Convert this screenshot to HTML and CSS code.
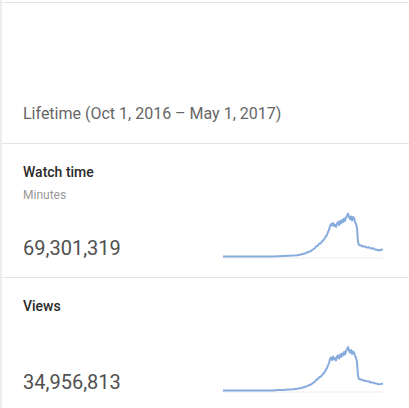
FILE: index.html
```html
<!DOCTYPE html>
<html lang="en">
<head>
  <meta charset="UTF-8" />
  <meta name="viewport" content="width=device-width, initial-scale=1.0"/>
  <title>Lifetime stats</title>
  <link rel="stylesheet" href="styles.css">
</head>
<body>
  <div class="panel">
    <div class="period">
      <span class="period-label">Lifetime (Oct 1, 2016 – May 1, 2017)</span>
    </div>

    <div class="metric">
      <div class="metric-info">
        <div class="metric-title">Watch time</div>
        <div class="metric-unit">Minutes</div>
        <div class="metric-value">69,301,319</div>
      </div>
      <svg class="spark" width="160" height="52" viewBox="0 0 160 52">
        <rect x="0" y="49.5" width="160" height="1" fill="#eeeeee"/>
        <polyline class="spark-line" points="0,48.5 50,48.5 55,48.2 60,48 65,47.8 70,47.6 74,47.2 78,46.5 80,45.8 82,45.5 84,44.5 86,43.8 88,43 90,41.5 92,40 93,38.5 95,37.5 96,36 98,35 99,33.5 101,31.5 102,30 103,28 104,27 105,24 106,22 107,18 108,16 109,17.5 110,15 111,18 112,16.5 113,19 114,15.5 115,14 116,17 117,13 118,15.5 119,12 120,14 121,10.5 122,13 123,9.5 124,8 125,5.5 126,9 127,11 128,8.5 129,12.5 130,9 131,10 132,14 133,16 134,20 135,34 136,37 138,37.5 140,38.5 142,38.6 144,39.5 146,39.3 148,40.5 150,40.2 152,41.5 154,41.8 156,42.5 158,41.8 160,41.5"/>
      </svg>
    </div>

    <div class="metric">
      <div class="metric-info">
        <div class="metric-title">Views</div>
        <div class="metric-value">34,956,813</div>
      </div>
      <svg class="spark" width="160" height="52" viewBox="0 0 160 52">
        <rect x="0" y="49.5" width="160" height="1" fill="#eeeeee"/>
        <polyline class="spark-line" points="0,48.5 50,48.5 55,48.1 60,47.9 65,47.6 70,47.3 74,46.8 78,46 80,45.5 82,44.8 84,44.2 86,43.2 88,42.5 90,41 92,39.5 93,38 95,37 96,35.5 98,34.5 99,33 101,31 102,29.5 103,27.5 104,26 105,23.5 106,21 107,17 108,15.5 109,18 110,14.5 111,17.5 112,16 113,18.5 114,14.5 115,13.5 116,16.5 117,12.5 118,15 119,11.5 120,13.5 121,10 122,12.5 123,9 124,7.5 125,5 126,8.5 127,10.5 128,8 129,12 130,9.5 131,10.5 132,14 133,15.5 134,20 135,34 136,37 138,37.5 140,38.2 142,38.8 144,39.3 146,39.5 148,40.5 150,40.6 152,41.2 154,41.8 156,42.4 158,41.9 160,41.6"/>
      </svg>
    </div>
  </div>
</body>
</html>
```

FILE: styles.css
```css
body {
  margin: 0;
  background: #ffffff;
  font-family: Roboto, 'Liberation Sans', sans-serif;
}

/* carte principale */
.panel {
  border-left: 2px solid #ececec;
  padding-top: 2px;
  min-height: 406px;
}

.period {
  box-sizing: border-box;
  height: 141px;
  border-top: 1px solid #e5e5e5;
  display: flex;
  flex-direction: column;
  justify-content: flex-end;
  padding: 0 0 19px 21px;
}

.period-label {
  font-size: 16px;
  line-height: 20px;
  color: #666666;
}

/* une ligne par indicateur */
.metric {
  box-sizing: border-box;
  height: 134px;
  border-top: 1px solid #e5e5e5;
  padding: 20px 26px 17px 21px;
  display: flex;
  justify-content: space-between;
}

.metric-info {
  display: flex;
  flex-direction: column;
}

.metric-title {
  font-size: 14px;
  line-height: 16px;
  font-weight: 500;
  color: #2a2a2a;
}

.metric-unit {
  margin-top: 7px;
  font-size: 12px;
  line-height: 16px;
  color: #999999;
}

.metric-value {
  margin-top: auto;
  font-size: 20px;
  line-height: 24px;
  color: #505050;
}

.spark {
  align-self: flex-end;
  display: block;
}

.spark-line {
  fill: none;
  stroke: #86abdd;
  stroke-width: 2;
  stroke-linejoin: round;
}
```
